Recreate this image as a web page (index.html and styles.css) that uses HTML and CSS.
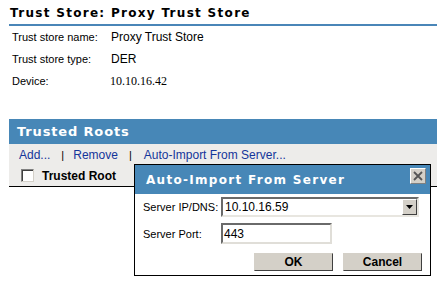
FILE: index.html
```html
<!DOCTYPE html>
<html>
<head>
<meta charset="utf-8">
<link rel="stylesheet" href="styles.css">
</head>
<body>
<div class="page">
  <h1 class="title">Trust Store: Proxy Trust Store</h1>
  <div class="props">
    <div class="row"><span class="label">Trust store name:</span><span class="value">Proxy Trust Store</span></div>
    <div class="row"><span class="label">Trust store type:</span><span class="value">DER</span></div>
    <div class="row"><span class="label">Device:</span><span class="value serif">10.10.16.42</span></div>
  </div>
  <section class="roots">
    <div class="roots-head">Trusted Roots</div>
    <div class="toolbar">
      <div class="links">
        <a class="link">Add...</a><span class="sep">|</span>
        <a class="link">Remove</a><span class="sep">|</span>
        <a class="link last">Auto-Import From Server...</a>
      </div>
      <div class="colhead">
        <span class="check"></span>
        <span class="colname">Trusted Root</span>
        <span class="dot"></span>
      </div>
    </div>
  </section>
</div>
<div class="dialog">
  <div class="dlg-title">
    <span class="dlg-caption">Auto-Import From Server</span>
    <span class="close">
      <svg width="12" height="12" viewBox="0 0 12 12"><path d="M2 2 L10 10 M10 2 L2 10" stroke="#555" stroke-width="1.8" fill="none"/></svg>
    </span>
  </div>
  <div class="dlg-body">
    <div class="field">
      <span class="flabel">Server IP/DNS:</span>
      <span class="select"><span class="select-text">10.10.16.59</span><span class="drop"><svg width="7" height="4" viewBox="0 0 7 4"><path d="M0 0 H7 L3.5 4 Z" fill="#000"/></svg></span></span>
    </div>
    <div class="field">
      <span class="flabel">Server Port:</span>
      <span class="input">443</span>
    </div>
    <div class="buttons">
      <span class="btn">OK</span>
      <span class="btn">Cancel</span>
    </div>
  </div>
</div>
</body>
</html>
```
FILE: styles.css
```css
html, body {
  margin: 0;
  padding: 0;
  background: #fff;
}
body {
  font-family: "Liberation Sans", Arial, sans-serif;
  font-size: 12px;
  color: #000;
  width: 437px;
  height: 282px;
  overflow: hidden;
  position: relative;
}
.page {
  padding-left: 9px;
}
.title {
  margin: 0;
  box-sizing: border-box;
  height: 26px;
  padding: 6px 0 0 1px;
  font-family: "DejaVu Sans", Verdana, sans-serif;
  font-weight: bold;
  font-size: 12px;
  line-height: 14px;
  letter-spacing: 1.3px;
  border-bottom: 2px solid #4a86b8;
}
.props {
  display: flex;
  flex-direction: column;
}
.row {
  height: 22px;
  display: flex;
  align-items: center;
  padding-left: 3px;
}
.label {
  width: 99px;
  font-size: 11px;
}
.value {
  font-size: 12px;
}
.serif {
  font-family: "Liberation Serif", "Times New Roman", serif;
  font-size: 12px;
  margin-left: -1px;
}
.roots {
  margin-top: 27px;
}
.roots-head {
  height: 25px;
  background: #4787b7;
  color: #fff;
  font-family: "DejaVu Sans", Verdana, sans-serif;
  font-weight: bold;
  font-size: 13px;
  letter-spacing: 0.85px;
  line-height: 25px;
  padding-left: 8px;
}
.toolbar {
  background: #edecea;
  border-bottom: 1px solid #000;
  height: 42px;
}
.links {
  height: 21px;
  display: flex;
  align-items: center;
  padding-left: 10px;
}
.link {
  color: #14359a;
}
.link.last {
  margin-left: 3px;
}
.sep {
  color: #000;
  margin: 0 9px 0 11px;
  font-size: 11px;
}
.colhead {
  height: 21px;
  display: flex;
  align-items: center;
  padding-left: 12px;
}
.check {
  width: 11px;
  height: 11px;
  background: #fff;
  border: 1px solid #808080;
  border-right-color: #d4d0c8;
  border-bottom-color: #d4d0c8;
  box-shadow: inset 1px 1px 0 #404040;
}
.colname {
  font-weight: bold;
  margin-left: 8px;
}
.dot {
  width: 2px;
  height: 2px;
  background: #333;
  margin-left: 18px;
  margin-top: 3px;
}
.dialog {
  position: absolute;
  left: 134px;
  top: 164px;
  width: 295px;
  height: 110px;
  border: 1px solid #000;
  background: #fff;
  display: flex;
  flex-direction: column;
}
.dlg-title {
  height: 29px;
  background: #4787b7;
  display: flex;
  align-items: center;
  justify-content: space-between;
  padding: 0 4px 0 11px;
}
.dlg-caption {
  color: #fff;
  font-family: "DejaVu Sans", Verdana, sans-serif;
  font-weight: bold;
  font-size: 12px;
  letter-spacing: 1.3px;
  margin-top: 1px;
}
.close {
  width: 14px;
  height: 14px;
  background: #d4d0c8;
  border: 1px solid #fff;
  border-right-color: #808080;
  border-bottom-color: #808080;
  display: flex;
  align-items: center;
  justify-content: center;
  align-self: flex-start;
  margin-top: 3px;
}
.dlg-body {
  padding: 3px 10px 0 8px;
  display: flex;
  flex-direction: column;
}
.field {
  display: flex;
  align-items: center;
}
.field + .field {
  margin-top: 6px;
}
.flabel {
  width: 78px;
  flex-shrink: 0;
  white-space: nowrap;
  font-size: 11px;
}
.select {
  width: 198px;
  height: 20px;
  box-sizing: border-box;
  border: 2px solid;
  border-color: #6a6a6a #e8e6e0 #e8e6e0 #6a6a6a;
  display: flex;
  align-items: center;
  justify-content: space-between;
  padding-left: 2px;
}
.drop {
  width: 15px;
  height: 16px;
  box-sizing: border-box;
  background: #d4d0c8;
  border: 1px solid;
  border-color: #fff #404040 #404040 #fff;
  display: flex;
  align-items: center;
  justify-content: center;
}
.input {
  width: 111px;
  height: 21px;
  box-sizing: border-box;
  border: 2px solid;
  border-color: #6a6a6a #e0ded8 #e0ded8 #6a6a6a;
  display: flex;
  align-items: center;
  padding-left: 1px;
}
.buttons {
  display: flex;
  justify-content: flex-end;
  gap: 10px;
  margin-top: 9px;
  margin-right: -2px;
}
.btn {
  width: 79px;
  height: 18px;
  box-sizing: border-box;
  background: #d4d0c8;
  border: 1px solid;
  border-color: #d4d0c8 #404040 #404040 #d4d0c8;
  font-weight: bold;
  display: flex;
  align-items: center;
  justify-content: center;
}
```
